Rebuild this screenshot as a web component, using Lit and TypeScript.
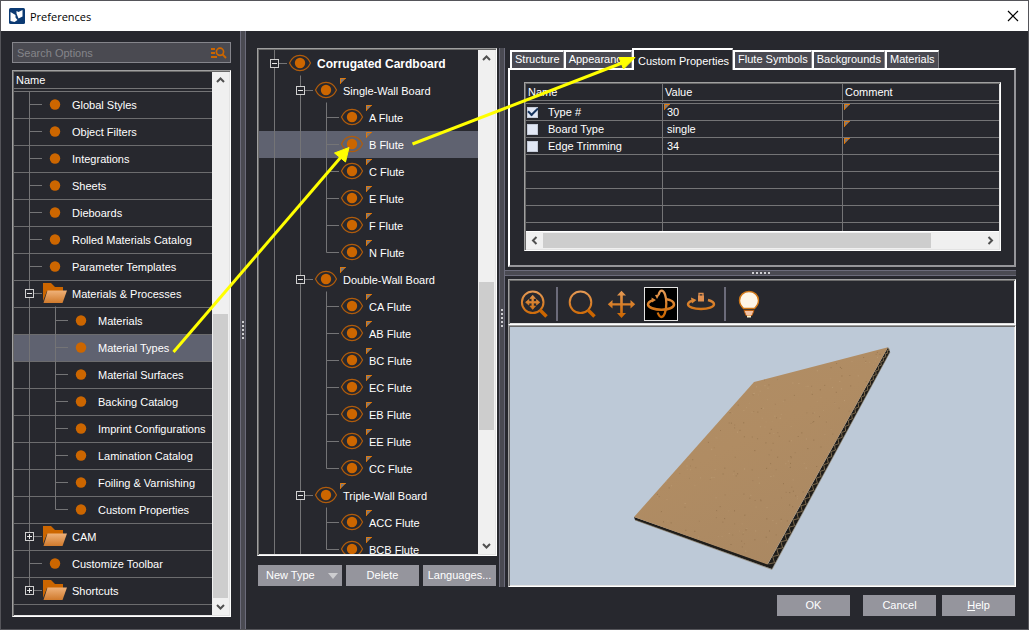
import { LitElement, html, svg, css, nothing } from "lit";
import { customElement, property, state } from "lit/decorators.js";
import { classMap } from "lit/directives/class-map.js";

type Icon = "dot" | "folder" | "eye";

interface TreeRow {
  label: string;
  level: number;
  icon: Icon;
  /** "-" expanded, "+" collapsed */
  expander?: "-" | "+";
  /** last sibling on its level */
  last?: boolean;
  bold?: boolean;
  flagged?: boolean;
}

const INDENT = 26;

const dot = (label: string, level = 0, last = false): TreeRow => ({ label, level, icon: "dot", last });
const flute = (label: string, last = false): TreeRow => ({ label, level: 2, icon: "eye", flagged: true, last });
const wall = (label: string): TreeRow => ({ label, level: 1, icon: "eye", flagged: true, expander: "-" });

const OPTIONS: TreeRow[] = [
  dot("Global Styles"),
  dot("Object Filters"),
  dot("Integrations"),
  dot("Sheets"),
  dot("Dieboards"),
  dot("Rolled Materials Catalog"),
  dot("Parameter Templates"),
  { label: "Materials & Processes", level: 0, icon: "folder", expander: "-" },
  dot("Materials", 1),
  dot("Material Types", 1),
  dot("Material Surfaces", 1),
  dot("Backing Catalog", 1),
  dot("Imprint Configurations", 1),
  dot("Lamination Catalog", 1),
  dot("Foiling & Varnishing", 1),
  dot("Custom Properties", 1, true),
  { label: "CAM", level: 0, icon: "folder", expander: "+" },
  dot("Customize Toolbar"),
  { label: "Shortcuts", level: 0, icon: "folder", expander: "+", last: true },
];

const TYPES: TreeRow[] = [
  { label: "Corrugated Cardboard", level: 0, icon: "eye", expander: "-", bold: true },
  wall("Single-Wall Board"),
  flute("A Flute"),
  flute("B Flute"),
  flute("C Flute"),
  flute("E Flute"),
  flute("F Flute"),
  flute("N Flute", true),
  wall("Double-Wall Board"),
  flute("CA Flute"),
  flute("AB Flute"),
  flute("BC Flute"),
  flute("EC Flute"),
  flute("EB Flute"),
  flute("EE Flute"),
  flute("CC Flute", true),
  wall("Triple-Wall Board"),
  flute("ACC Flute"),
  flute("BCB Flute", true),
];

const flagIcon = html`<svg class="flag" width="6" height="6" viewBox="0 0 6 6" aria-hidden="true">
  <path d="M0 0h6L0 6z" fill="#777980" /><path d="M.5 6V.5H6" fill="none" stroke="#dd7a10" /><path d="M0 6L6 0" stroke="#cc6600" stroke-width=".7" />
</svg>`;

@customElement("scroll-bar")
class ScrollBar extends LitElement {
  @property({ type: Boolean, reflect: true }) horizontal = false;
  @property({ type: Number }) start = 0;
  @property({ type: Number }) size = 50;

  static styles = css`
    :host { display: flex; flex-direction: column; flex: none; width: 17px; background: #f0f0f0; }
    :host([horizontal]) { flex-direction: row; width: auto; height: 17px; }
    button { flex: none; width: 17px; height: 17px; padding: 0; border: 0; background: none; display: grid; place-items: center; }
    .track { flex: 1; display: flex; flex-direction: column; min-height: 0; padding: 0 1px; }
    :host([horizontal]) .track { flex-direction: row; padding: 1px 0; }
    .gap { flex: none; }
    .thumb { flex: none; background: #cdcdcd; }
    path { fill: none; stroke: #505050; stroke-width: 2; }
  `;

  render() {
    const dim = this.horizontal ? "width" : "height";
    const [back, fwd] = this.horizontal
      ? ["M6.5 1L3 4.5L6.5 8", "M2.5 1L6 4.5L2.5 8"]
      : ["M1 6L4.5 2.5L8 6", "M1 3L4.5 6.5L8 3"];
    const arrow = (d: string, label: string) => html`<button aria-label=${label} tabindex="-1">
      <svg width="9" height="9" viewBox="0 0 9 9"><path d=${d} /></svg>
    </button>`;
    return html`${arrow(back, "Scroll back")}
      <div class="track">
        <div class="gap" style="${dim}:${this.start}%"></div>
        <div class="thumb" style="${dim}:${this.size}%"></div>
      </div>
      ${arrow(fwd, "Scroll forward")}`;
  }
}

@customElement("option-tree")
class OptionTree extends LitElement {
  @property({ attribute: false }) rows: TreeRow[] = [];
  @property() selected = "";
  @property() label = "";
  @property({ type: Boolean, reflect: true }) ruled = false;

  static styles = css`
    :host { display: block; flex: 1; min-width: 0; overflow: hidden; }
    ul { list-style: none; margin: 0; padding: 0; }
    li { display: flex; align-items: center; height: 27px; gap: 4px; white-space: nowrap; cursor: default; }
    :host([ruled]) li { background: linear-gradient(#6c6c6e, #6c6c6e) bottom / 100% 1px no-repeat; }
    li.on, :host([ruled]) li.on { background-color: #5f6270; }
    .guides { flex: none; }
    .text { position: relative; line-height: 27px; }
    :host(:not([ruled])) .text { padding-top: 1px; line-height: 28px; }
    .bold { font-weight: 700; font-size: 12px; }
    .flag { position: absolute; left: -3px; top: 2px; }
    .line { fill: none; stroke: #747476; }
  `;

  private icon(kind: Icon, x: number) {
    if (kind === "folder")
      return svg`<g transform="translate(${x - 12} 2)">
        <path d="M0 0h8l4 4h8v4H4L0 18z" fill="#cc6600" />
        <path d="M4.500 7.500H24L19.500 20H0.500z" fill="url(#sheet)" />
      </g>`;
    if (kind === "eye")
      return svg`<g transform="translate(${x} 13)">
        <path d="M-10.500 0C-8.500-4.500-4.500-7.600 0-7.600S8.500-4.500 10.500 0C8.500 4.500 4.500 7.600 0 7.600S-8.500 4.500-10.500 0z" fill="none" stroke="#b05c0c" stroke-width="1.200" />
        <circle r="5.200" fill="#cc6600" />
      </g>`;
    return svg`<circle cx=${x} cy="12.500" r="5.200" fill="#cc6600" />`;
  }

  private guides(row: TreeRow) {
    const x = 15.5 + INDENT * row.level;
    const y = row.icon === "eye" ? 13.5 : 12.5;
    const w = 54 + INDENT * row.level;
    const parts = [];
    for (let i = 0; i < row.level; i++) parts.push(`M${15.5 + INDENT * i} 0V27`);
    parts.push(`M${x} 0V${row.last ? y : 27}`);
    parts.push(`M${x} ${y}h12.500`);
    if (row.expander === "-") parts.push(`M${x + INDENT} 25.500V27`);
    return html`<svg class="guides" width=${w} height="27" viewBox="0 0 ${w} 27" aria-hidden="true">
      <defs><linearGradient id="sheet" x1="0" y1="0" x2="0" y2="1">
        <stop offset="0" stop-color="#efb27a" /><stop offset="1" stop-color="#d07a2c" />
      </linearGradient></defs>
      <path class="line" d=${parts.join("")} />
      ${row.expander
        ? svg`<rect x=${x - 4} y=${y - 4} width="8" height="8" fill="#27282e" stroke="#d0d0d0" />
            <path d="M${x - 2.5} ${y}h5${row.expander === "+" ? `M${x} ${y - 2.5}v5` : ""}" stroke="#e6e6e6" />`
        : nothing}
      ${this.icon(row.icon, 41 + INDENT * row.level)}
    </svg>`;
  }

  render() {
    return html`<ul role="tree" aria-label=${this.label}>
      ${this.rows.map(
        (r) => html`<li
          role="treeitem"
          aria-level=${r.level + 1}
          aria-selected=${r.label === this.selected}
          class=${classMap({ on: r.label === this.selected })}
          @click=${() => (this.selected = r.label)}
        >
          ${this.guides(r)}<span class=${classMap({ text: true, bold: !!r.bold })}>${r.flagged ? flagIcon : nothing}${r.label}</span>
        </li>`
      )}
    </ul>`;
  }
}

@customElement("board-view")
class BoardView extends LitElement {
  static styles = css`
    :host { display: block; flex: 1; min-height: 0; background: #bdc9d7; overflow: hidden; }
    svg { display: block; width: 100%; height: 100%; }
  `;

  private specks() {
    let s = 7;
    const rnd = () => (s = (s * 16807) % 2147483647) / 2147483647;
    return Array.from({ length: 260 }, () => {
      const u = rnd();
      const v = rnd();
      // bilinear placement over the board's top face
      const x = (1 - v) * (244 + 134 * u) + v * (124 + 134 * u);
      const y = (1 - v) * (55 - 35 * u) + v * (190 + 48 * u);
      const dark = rnd() > 0.45;
      return svg`<rect x=${x.toFixed(1)} y=${y.toFixed(1)} width="1" height="1" fill=${dark ? "#7d5f3c" : "#c9ab84"} opacity=${(0.2 + rnd() * 0.35).toFixed(2)} />`;
    });
  }

  private flutes() {
    const n = 72;
    let d = "";
    for (let i = 0; i <= n; i++) {
      const t = Math.pow(i / n, 1.25);
      const side = i % 2;
      const x = 378.5 - 120 * t + side * (1.5 + 2.5 * t);
      const y = 21 + 216 * t + side * (1 + 1.5 * t);
      d += `${i ? "L" : "M"}${x.toFixed(1)} ${y.toFixed(1)}`;
    }
    return d;
  }

  render() {
    return html`<svg viewBox="0 0 504 258" preserveAspectRatio="xMidYMid slice" role="img" aria-label="Corrugated board preview">
      <defs>
        <linearGradient id="kraft" x1="0" y1="0" x2=".6" y2="1">
          <stop offset="0" stop-color="#b08e66" /><stop offset=".5" stop-color="#b08c63" /><stop offset="1" stop-color="#aa8862" />
        </linearGradient>
      </defs>
      <path d="M124 190L258 237L378 20.300L380 25L262 242L125 193z" fill="#1f1d1a" />
      <path d="M244 55L378 20.300L257.500 237.500L124 190z" fill="url(#kraft)" />
      <path d=${this.flutes()} fill="none" stroke="#a08660" stroke-width=".7" />
      <path d="M380 25L262 242.500L125 193" fill="none" stroke="#8a7a62" stroke-width=".6" />
      ${this.specks()}
    </svg>`;
  }
}

const orange = "url(#amber)";
const ICONS = {
  fit: svg`<circle cx="16.700" cy="15.300" r="10.800" fill="none" stroke=${orange} stroke-width="2" />
    <path d="M24 23L30.500 29.500" stroke="#cc6600" stroke-width="3.500" />
    <path d="M15.900 14.500V11.500h-2L16.700 8.200l2.800 3.300h-2V14.500H20.500v-2l3.300 2.800-3.300 2.800v-2H17.500V19.100h2L16.700 22.400l-2.800-3.300h2V16.100H12.900v2L9.600 15.300l3.300-2.800v2z" fill=${orange} stroke=${orange} stroke-width=".7" />`,
  zoom: svg`<circle cx="16.500" cy="15.300" r="10.800" fill="none" stroke=${orange} stroke-width="2" />
    <path d="M24 23L30.500 29.500" stroke="#cc6600" stroke-width="3.500" />`,
  pan: svg`<path d="M16.200 16.200V8.500h-3.200L17.500 3.800l4.500 4.700H18.800v7.700h7.700v-3.200l4.700 4.300-4.700 4.300v-3H18.800v7.500h3.200l-4.500 5-4.500-5H16.200v-7.500H8.500v3L3.800 17.300l4.700-4.300v3.200z" fill=${orange} />`,
  orbit: svg`<g fill="none" stroke=${orange}>
      <path d="M21.500 12C27 12.800 30 15 30 17.500C30 20.500 24.500 22.800 17.500 22.800S4 20.500 4 17.500C4 15.800 5.500 14.400 8.500 13.300" stroke-width="2.500" />
      <path d="M14.500 8C15.300 5 16.500 3.700 17.700 3.700C20.300 3.700 22.300 9.500 22.300 16.500S20.300 30 17.500 30C16 30 14.700 28.500 13.700 25.500" stroke-width="2.300" />
    </g>
    <path d="M11 8L15.500 7.500L13 12zM7.500 10.500L12 13L8 15.500z" fill=${orange} />`,
  lock: svg`<path d="M24 13C28 14 30 15.500 30 17.300C30 20 24.500 22 17 22S4 20 4 17.300C4 15.800 5.500 14.600 8 13.800" fill="none" stroke=${orange} stroke-width="2.400" />
    <path d="M7 10.500L12.500 13L8 16.500z" fill=${orange} />
    <rect x="14" y="8.500" width="6" height="6" fill="#e09050" /><path d="M15 9V6.500h4V9" fill="none" stroke="#e09050" stroke-width="1.300" />`,
  light: svg`<path d="M17 4.500C11.500 4.500 7.500 8.500 7.500 13.500C7.500 17.500 9.500 19.500 11.500 21.500H22.500C24.500 19.500 26.500 17.500 26.500 13.500C26.500 8.500 22.500 4.500 17 4.500z" fill="#fdf6e8" stroke="#d07818" stroke-width="1.400" />
    <path d="M12 23.500H22L20 28.500H14z" fill="#f2c2a4" stroke="#c4600a" stroke-width=".9" /><rect x="15" y="28.500" width="4" height="2" fill="#fff0c8" />`,
};

@customElement("app-root")
class AppRoot extends LitElement {
  @state() private tab = "Custom Properties";
  @state() private tool = "orbit";

  static styles = css`
    :host { display: flex; flex-direction: column; position: relative; height: 100vh; min-height: 480px; box-sizing: border-box; overflow: hidden;
      border: 1px solid #55555a; background: #27282e; color: #fff; font: 11px/13px "Liberation Sans", Arial, sans-serif; }
    * { box-sizing: border-box; }
    button, input { font: inherit; color: inherit; }

    .title { display: flex; align-items: center; height: 30px; padding: 0 9px 0 8px; gap: 5px; background: #fff; color: #000; font: 11px "Open Sans", "Noto Sans", sans-serif; flex: none; }
    .title h1 { flex: 1; margin: 0; font: inherit; }
    .close { width: 12px; height: 12px; padding: 0; border: 0; background: none; display: grid; }

    .body { flex: 1; min-height: 0; display: flex; }
    .options { flex: none; width: 239px; display: flex; flex-direction: column; gap: 7px; padding: 11px 9px 12px 11px; }
    .search { flex: none; display: flex; align-items: center; height: 21px; padding: 0 3px 0 4px; border: 1px solid #85858b; background: #4a4a51; }
    .search input { flex: 1; min-width: 0; height: 19px; padding: 0; border: 0; outline: 0; background: none; }
    .search input::placeholder { color: #85858a; }

    .sunken { border: 1px solid; border-color: #a0a0a0 #fff #fff #a0a0a0; padding: 1px; box-shadow: inset 1px 1px #696969, inset -1px -1px #e3e3e3; min-height: 0; }
    .grow { flex: 1; display: flex; }
    .listing { flex: 1; min-width: 0; display: flex; flex-direction: column; }
    .listing option-tree { min-height: 0; }
    .heading { flex: none; height: 20px; padding-left: 2px; line-height: 16px; border-bottom: 4px double #747476; }

    .bar { flex: none; width: 6px; background: #4a4a52; border: 1px solid #6b6b7a; border-width: 0 1px; display: grid; place-items: center; }
    .bar.flat { width: auto; height: 6px; margin-left: -3px; border-width: 1px 0; }

    .main { flex: 1; min-width: 0; display: flex; flex-direction: column; padding: 17px 12px 13px 11px; gap: 8px; }
    .panes { flex: 1; min-height: 0; display: flex; }
    .types { flex: none; width: 240px; margin-right: 2px; display: flex; flex-direction: column; gap: 9px; padding-bottom: 1px; }
    .detail { flex: 1; min-width: 0; margin-left: 3px; display: flex; flex-direction: column; gap: 3px; }

    .actions { display: flex; gap: 4px; padding: 0 1px; }
    .push { flex: 1; height: 21px; padding: 0; border: 0; background: #95959d; text-align: center; white-space: nowrap; }
    .drop { flex: none; width: 84px; display: flex; align-items: center; justify-content: space-between; padding: 0 4px 0 8px; }
    .confirm { display: flex; justify-content: flex-end; padding-right: 1px; }
    .confirm .push { flex: none; width: 73px; margin-left: 13px; }
    .confirm .push:last-child { margin-left: 6px; }

    .tabs { display: flex; align-items: flex-end; height: 20px; padding-left: 2px; }
    .tab { height: 18px; padding: 0 3px 1px 3px; border: solid; border-width: 2px 1px 0 2px; border-color: #fff #85858a #fff #fff; background: #4a4a52; white-space: nowrap; line-height: 13px; }
    .tab.on { position: relative; height: 22px; margin-bottom: -2px; padding: 2px 3px 0 4px; background: #27282e; }
    .sheet { padding: 12px 13px 14px 14px; border: 2px solid; border-color: #fff #96969a #96969a #fff; }

    .grid { height: 147px; overflow: hidden; }
    .hscroll { border-top: 1px solid #fff; }
    table { width: 100%; table-layout: fixed; border-collapse: separate; border-spacing: 0; }
    col.name { width: 137px; }
    col.value { width: 180px; }
    th { height: 20px; padding: 0 2px; border-bottom: 4px double #747476; text-align: left; font-weight: 400; line-height: 16px; }
    td { position: relative; height: 17px; padding: 0 4px; border-bottom: 1px solid #747476; line-height: 16px; white-space: nowrap; }
    th:not(:last-child), td:not(:last-child) { border-right: 1px solid #747476; }
    td:first-child { padding-left: 1px; }
    td label { display: flex; align-items: center; gap: 10px; height: 16px; }
    td .flag { position: absolute; left: 1px; top: 0; }
    .tick { appearance: none; flex: none; width: 11px; height: 11px; margin: 0; background: #e2e8f5; border: 1px solid #c4cbd8; display: grid; place-items: center; }
    .tick:checked::before { content: ""; width: 8px; height: 4px; border: solid #17355e; border-width: 0 0 2px 2px; transform: rotate(-45deg) translate(1px, -1px); }

    .stage { flex: 1; min-height: 0; display: flex; flex-direction: column; }
    .tools { flex: none; display: flex; gap: 6px; height: 46px; padding: 7px 1px 1px 7px; }
    .tool { flex: none; width: 34px; height: 34px; padding: 0; border: 0; background: none; display: grid; place-items: center; }
    .tool.on { background: #000; outline: 1px solid #e4e4e4; outline-offset: -1px; }
    .rule { width: 2px; height: 34px; background: #6b6b7a; }
    .note { position: absolute; left: -1px; top: -1px; pointer-events: none; }
  `;

  private grip(flat = false) {
    const dots = [0, 4, 8, 12, 16].map((p) => (flat ? svg`<rect x=${p} y="0" width="2" height="2" />` : svg`<rect x="0" y=${p} width="2" height="2" />`));
    return flat
      ? html`<svg width="18" height="2" fill="#cfcfd3" aria-hidden="true">${dots}</svg>`
      : html`<svg width="2" height="18" fill="#cfcfd3" aria-hidden="true">${dots}</svg>`;
  }

  private toolButton(id: keyof typeof ICONS, label: string) {
    return html`<button class="tool ${this.tool === id ? "on" : ""}" aria-label=${label} @click=${() => (this.tool = id)}>
      <svg width="34" height="34" viewBox="0 0 34 34">
        <defs><linearGradient id="amber" gradientUnits="userSpaceOnUse" x1="0" y1="4" x2="0" y2="30">
          <stop offset="0" stop-color="#e59a55" /><stop offset="1" stop-color="#cc6600" />
        </linearGradient></defs>
        ${ICONS[id]}
      </svg>
    </button>`;
  }

  private propRow(name: string, value: string, checked: boolean, flagged: boolean) {
    return html`<tr>
      <td><label><input class="tick" type="checkbox" .checked=${checked} />${name}</label></td>
      <td>${flagged ? flagIcon : nothing}${value}</td>
      <td>${flagIcon}</td>
    </tr>`;
  }

  render() {
    const tabs = ["Structure", "Appearance", "Custom Properties", "Flute Symbols", "Backgrounds", "Materials"];
    return html`
      <header class="title">
        <svg width="16" height="16" viewBox="0 0 16 16" aria-hidden="true">
          <rect width="16" height="16" rx="1.500" fill="#0b3a73" />
          <path d="M1.500 4L6.500 7V9.500L8.500 12L5.500 14L1.500 13z" fill="#fff" />
          <path d="M7.500 5.500V3L9.500 4L13.500 2V8.500L9.500 10.500z" fill="#fff" />
        </svg>
        <h1>Preferences</h1>
        <button class="close" aria-label="Close"><svg width="12" height="12" viewBox="0 0 12 12"><path d="M1 1L11 11M11 1L1 11" stroke="#000" stroke-width="1.200" /></svg></button>
      </header>
      <div class="body">
        <aside class="options">
          <label class="search">
            <input type="text" placeholder="Search Options" aria-label="Search Options" />
            <svg width="16" height="12" viewBox="0 0 16 12" fill="none" stroke="#cc6600" aria-hidden="true">
              <path d="M0 2H4M0 6H4M0 10H6" stroke-width="1.800" /><circle cx="9" cy="4.800" r="3.600" stroke-width="1.700" /><path d="M11.500 7.300L15 11" stroke-width="1.900" />
            </svg>
          </label>
          <div class="sunken grow">
            <div class="listing">
              <div class="heading">Name</div>
              <option-tree ruled label="Options" .rows=${OPTIONS} selected="Material Types"></option-tree>
            </div>
            <scroll-bar start="44.2" size="55.8"></scroll-bar>
          </div>
        </aside>
        <div class="bar">${this.grip()}</div>
        <main class="main">
          <div class="panes">
            <section class="types">
              <div class="sunken grow">
                <option-tree label="Material types" .rows=${TYPES} selected="B Flute"></option-tree>
                <scroll-bar start="45.7" size="31.5"></scroll-bar>
              </div>
              <div class="actions">
                <button class="push drop">New Type
                  <svg width="10" height="6" viewBox="0 0 10 6" aria-hidden="true"><path d="M0 0H10L5 6z" fill="#cdcdd0" /></svg>
                </button>
                <button class="push">Delete</button>
                <button class="push">Languages...</button>
              </div>
            </section>
            <div class="bar">${this.grip()}</div>
            <section class="detail">
              <div>
                <div class="tabs" role="tablist">
                  ${tabs.map((t) => html`<button role="tab" aria-selected=${t === this.tab} class="tab ${t === this.tab ? "on" : ""}" @click=${() => (this.tab = t)}>${t}</button>`)}
                </div>
                <div class="sheet" role="tabpanel">
                  <div class="sunken">
                    <div class="grid">
                      <table>
                        <colgroup><col class="name" /><col class="value" /><col /></colgroup>
                        <thead><tr><th>Name</th><th>Value</th><th>Comment</th></tr></thead>
                        <tbody>
                          ${this.propRow("Type #", "30", true, true)}
                          ${this.propRow("Board Type", "single", false, false)}
                          ${this.propRow("Edge Trimming", "34", false, false)}
                          ${[0, 1, 2, 3, 4].map(() => html`<tr><td></td><td></td><td></td></tr>`)}
                        </tbody>
                      </table>
                    </div>
                    <div class="hscroll"><scroll-bar horizontal start="0" size="88.4"></scroll-bar></div>
                  </div>
                </div>
              </div>
              <div class="bar flat">${this.grip(true)}</div>
              <div class="stage">
                <div class="tools sunken" role="toolbar" aria-label="View">
                  ${this.toolButton("fit", "Fit to window")}
                  <span class="rule"></span>
                  ${this.toolButton("zoom", "Zoom")} ${this.toolButton("pan", "Pan")} ${this.toolButton("orbit", "Rotate")} ${this.toolButton("lock", "Rotate around axis")}
                  <span class="rule"></span>
                  ${this.toolButton("light", "Lighting")}
                </div>
                <div class="sunken grow"><board-view></board-view></div>
              </div>
            </section>
          </div>
          <footer class="confirm">
            <button class="push">OK</button>
            <button class="push">Cancel</button>
            <button class="push"><u>H</u>elp</button>
          </footer>
        </main>
      </div>
      <svg class="note" width="660" height="380" viewBox="0 0 660 380" aria-hidden="true">
        <g fill="#ffff00" stroke="#ffff00">
          <path d="M173.500 352L341 157" stroke-width="3" /><path d="M349 147.500L345.500 162L334.500 153z" />
          <path d="M412.500 144L622 63" stroke-width="3" /><path d="M635 57.500L623.500 69L619 57.500z" />
        </g>
      </svg>
    `;
  }
}
